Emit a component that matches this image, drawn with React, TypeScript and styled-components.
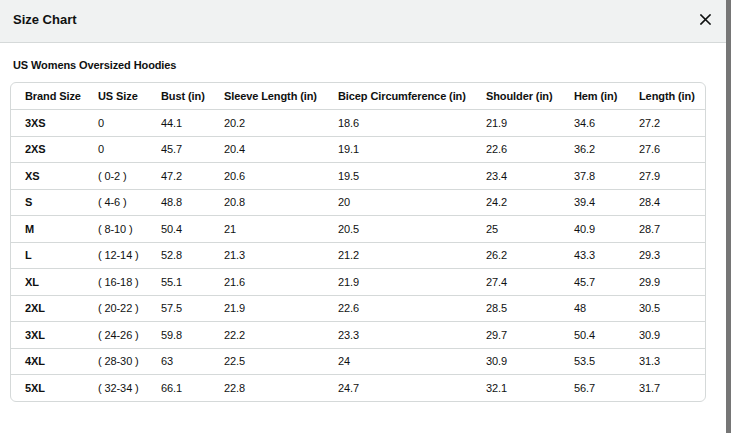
import React from "react";
import styled, { createGlobalStyle } from "styled-components";

const Global = createGlobalStyle`
  html, body { margin: 0; padding: 0; height: 100%; }
  body { font-family: "Liberation Sans", Arial, sans-serif; color: #0f1111; background: #7a7a7a; }
  #root { height: 100%; }
`;

const Page = styled.div`
  display: flex;
  height: 433px;
  width: 731px;
  overflow: hidden;
`;

const Modal = styled.div`
  width: 726px;
  background: #fff;
  display: flex;
  flex-direction: column;
`;

const Backdrop = styled.div`
  flex: 1;
  background: #767676;
`;

const Header = styled.div`
  height: 43px;
  box-sizing: border-box;
  background: #f0f2f2;
  border-bottom: 1px solid #d5d9d9;
  display: flex;
  align-items: center;
  justify-content: space-between;
  padding: 0 14px 0 13px;
`;

const Title = styled.h2`
  margin: 0;
  font-size: 13px;
  font-weight: 700;
  line-height: 1;
  margin-top: -4px;
`;

const Close = styled.button`
  border: 0;
  background: transparent;
  padding: 0;
  width: 13px;
  height: 13px;
  display: flex;
  align-items: center;
  justify-content: center;
  cursor: pointer;
  margin-top: -3px;
`;

const Body = styled.div`
  padding: 16px 20px 0 10px;
`;

const Subtitle = styled.h3`
  margin: 0 0 10px 3px;
  font-size: 11px;
  font-weight: 700;
  line-height: 13px;
  letter-spacing: -0.1px;
`;

const TableBox = styled.div`
  border: 1px solid #d5d9d9;
  border-radius: 6px;
  overflow: hidden;
  width: 696px;
  box-sizing: border-box;
`;

const Table = styled.table`
  width: 100%;
  border-collapse: collapse;
  table-layout: fixed;
  font-size: 11px;
  letter-spacing: -0.1px;
`;

const Th = styled.th`
  text-align: left;
  font-weight: 700;
  height: 26px;
  padding: 0 0 0 14px;
  white-space: nowrap;
  border-bottom: 1px solid #d5d9d9;
  vertical-align: middle;
`;

const Tr = styled.tr`
  &:not(:last-child) td { border-bottom: 1px solid #d5d9d9; }
`;

const Td = styled.td<{ $bold?: boolean }>`
  height: 25.5px;
  padding: 0 0 0 14px;
  font-weight: ${(p) => (p.$bold ? 700 : 400)};
  white-space: nowrap;
  vertical-align: middle;
`;

const widths = [73, 63, 63, 114, 148, 88, 65, 80];
const headers = [
  "Brand Size",
  "US Size",
  "Bust (in)",
  "Sleeve Length (in)",
  "Bicep Circumference (in)",
  "Shoulder (in)",
  "Hem (in)",
  "Length (in)",
];

const rows: string[][] = [
  ["3XS", "0", "44.1", "20.2", "18.6", "21.9", "34.6", "27.2"],
  ["2XS", "0", "45.7", "20.4", "19.1", "22.6", "36.2", "27.6"],
  ["XS", "( 0-2 )", "47.2", "20.6", "19.5", "23.4", "37.8", "27.9"],
  ["S", "( 4-6 )", "48.8", "20.8", "20", "24.2", "39.4", "28.4"],
  ["M", "( 8-10 )", "50.4", "21", "20.5", "25", "40.9", "28.7"],
  ["L", "( 12-14 )", "52.8", "21.3", "21.2", "26.2", "43.3", "29.3"],
  ["XL", "( 16-18 )", "55.1", "21.6", "21.9", "27.4", "45.7", "29.9"],
  ["2XL", "( 20-22 )", "57.5", "21.9", "22.6", "28.5", "48", "30.5"],
  ["3XL", "( 24-26 )", "59.8", "22.2", "23.3", "29.7", "50.4", "30.9"],
  ["4XL", "( 28-30 )", "63", "22.5", "24", "30.9", "53.5", "31.3"],
  ["5XL", "( 32-34 )", "66.1", "22.8", "24.7", "32.1", "56.7", "31.7"],
];

export default function App() {
  return (
    <Page>
      <Global />
      <Modal>
        <Header>
          <Title>Size Chart</Title>
          <Close aria-label="Close">
            <svg width="11" height="11" viewBox="0 0 11 11">
              <path d="M1 1 L10 10 M10 1 L1 10" stroke="#0f1111" strokeWidth="1.6" strokeLinecap="square" />
            </svg>
          </Close>
        </Header>
        <Body>
          <Subtitle>US Womens Oversized Hoodies</Subtitle>
          <TableBox>
            <Table>
              <colgroup>
                {widths.map((w, i) => (
                  <col key={i} style={{ width: w }} />
                ))}
              </colgroup>
              <thead>
                <tr>
                  {headers.map((h) => (
                    <Th key={h}>{h}</Th>
                  ))}
                </tr>
              </thead>
              <tbody>
                {rows.map((r) => (
                  <Tr key={r[0]}>
                    {r.map((c, i) => (
                      <Td key={i} $bold={i === 0}>
                        {c}
                      </Td>
                    ))}
                  </Tr>
                ))}
              </tbody>
            </Table>
          </TableBox>
        </Body>
      </Modal>
      <Backdrop />
    </Page>
  );
}
